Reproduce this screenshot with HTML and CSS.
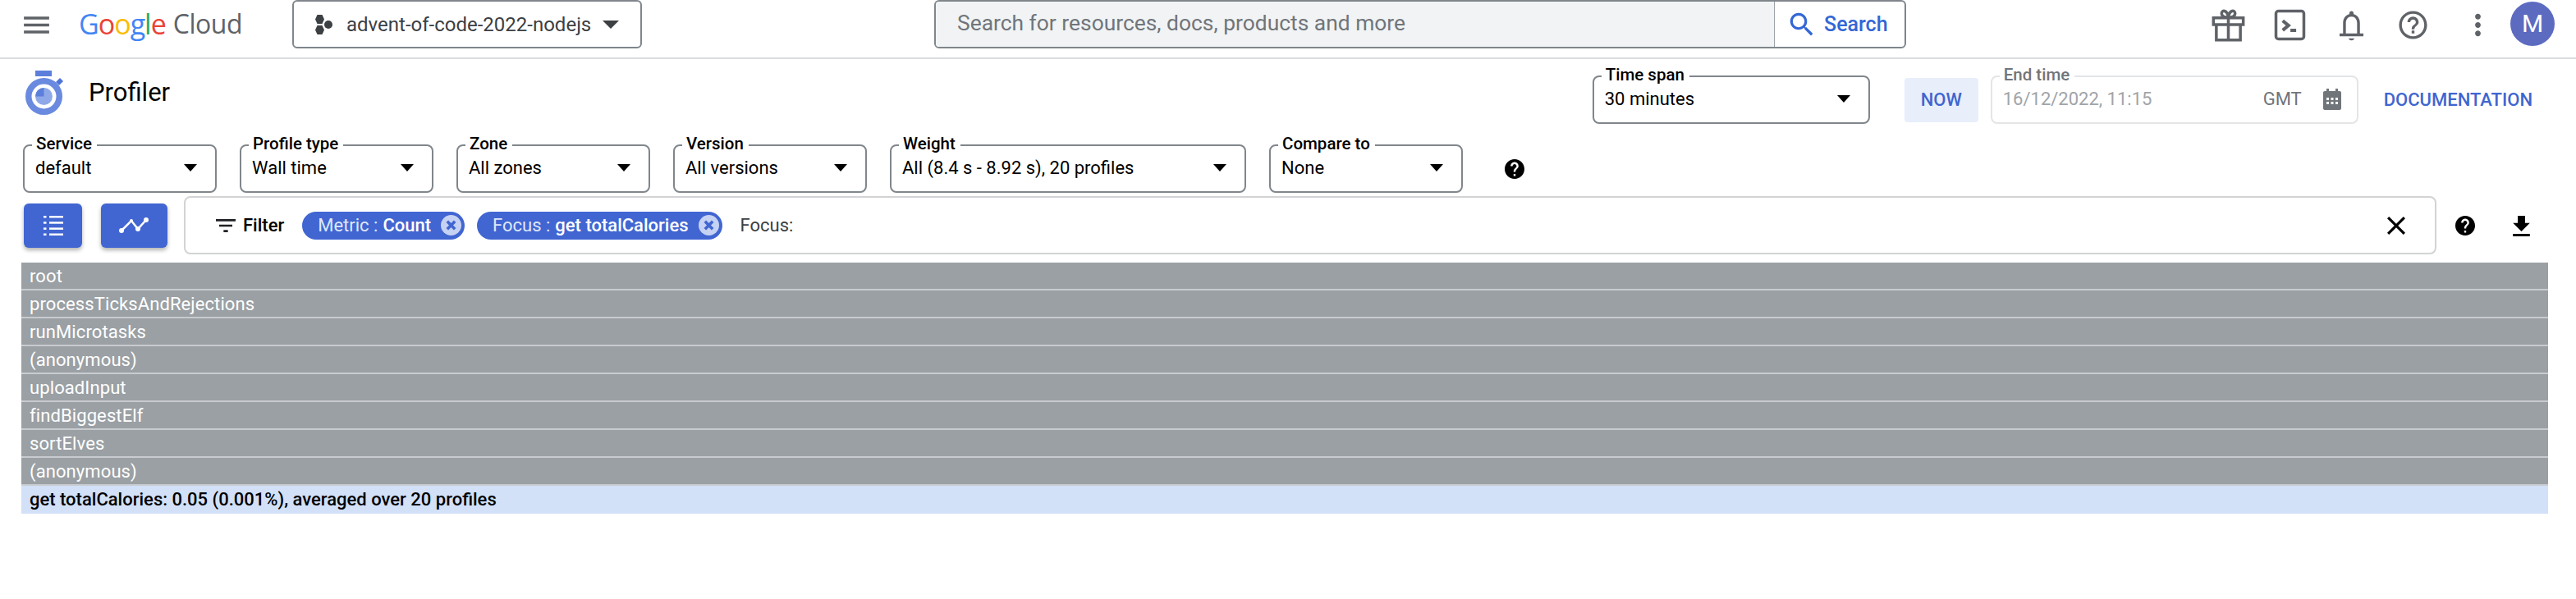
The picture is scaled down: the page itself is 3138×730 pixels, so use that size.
FILE: index.html
```html
<!DOCTYPE html>
<html lang="en">
<head>
<meta charset="UTF-8">
<title>Profiler - Google Cloud</title>
<link rel="stylesheet" href="styles.css">
</head>
<body>

<header class="topbar">
    <svg class="menu-icon" viewBox="0 0 24 24"><path d="M3 18h18v-2H3v2zm0-5h18v-2H3v2zm0-7v2h18V6H3z"/></svg>
    <div class="logo">
        <span class="blue">G</span><span class="red">o</span><span class="yellow">o</span><span class="blue">g</span><span class="green">l</span><span class="red">e</span>
        <span class="logo-cloud">Cloud</span>
    </div>
    <div class="project">
        <svg class="project-icon" viewBox="0 0 22 24"><path d="M3.500 0h6L12 5.500 9.500 11h-6L1 5.500zM3.500 13h6l2.500 5.500L9.500 24h-6L1 18.500z"/><circle cx="17" cy="12" r="5"/></svg>
        <span class="project-name">advent-of-code-2022-nodejs</span>
        <span class="arrow arrow-big"></span>
    </div>
    <div class="search">
        <div class="search-input">Search for resources, docs, products and more</div>
        <div class="search-btn">
            <svg viewBox="0 0 24 24"><path d="M15.500 14h-.79l-.28-.27C15.410 12.590 16 11.110 16 9.500 16 5.910 13.090 3 9.500 3S3 5.910 3 9.500 5.910 16 9.500 16c1.610 0 3.090-.59 4.230-1.570l.27.28v.79l5 4.990L20.490 19l-4.990-5zm-6 0C7.010 14 5 11.990 5 9.500S7.010 5 9.500 5 14 7.010 14 9.500 11.990 14 9.500 14z"/></svg>
            Search
        </div>
    </div>
    <div class="top-icons">
        <svg class="top-icon" viewBox="0 0 35 35"><path d="M2 10h31v7H2zM5 17v16h25V17M17.500 10v23M17.500 9.500c-4 0-7-1-7-4 0-4 6-4 7 4zM17.500 9.500c4 0 7-1 7-4 0-4-6-4-7 4z"/></svg>
        <svg class="top-icon" viewBox="0 0 35 35"><rect x="3" y="3" width="29" height="29" rx="2.500"/><path class="thick" d="M10 13l6 5-6 5M18 23h6"/></svg>
        <svg class="top-icon fill" viewBox="0 0 24 24"><path d="M12 23c1.100 0 2-.7 2-1.500h-4c0 .8.900 1.500 2 1.500zm6-5v-7.500c0-3.070-1.630-5.640-4.500-6.320V3.500c0-.830-.670-1.500-1.500-1.500s-1.500.670-1.500 1.500v.680C7.640 4.860 6 7.420 6 10.500V18H3.500v2h17v-2H18zm-2 0H8v-7.500C8 8.020 9.510 6 12 6s4 2.020 4 4.500V18z"/></svg>
        <svg class="top-icon fill" viewBox="0 0 24 24"><path d="M11 18h2v-2h-2v2zm1-16C6.480 2 2 6.480 2 12s4.480 10 10 10 10-4.480 10-10S17.520 2 12 2zm0 18c-4.410 0-8-3.590-8-8s3.590-8 8-8 8 3.590 8 8-3.590 8-8 8zm0-14c-2.210 0-4 1.790-4 4h2c0-1.100.900-2 2-2s2 .900 2 2c0 2-3 1.750-3 5h2c0-2.250 3-2.500 3-5 0-2.210-1.790-4-4-4z"/></svg>
        <svg class="top-icon fill dots" viewBox="0 0 24 24"><path d="M12 8c1.100 0 2-.900 2-2s-.900-2-2-2-2 .900-2 2 .900 2 2 2zm0 2c-1.100 0-2 .900-2 2s.900 2 2 2 2-.900 2-2-.900-2-2-2zm0 6c-1.100 0-2 .900-2 2s.900 2 2 2 2-.900 2-2-.900-2-2-2z"/></svg>
    </div>
    <div class="avatar">M</div>
</header>

<section class="title-row">
    <svg class="profiler-icon" viewBox="0 0 47 54">
        <rect x="13" y="0" width="20" height="7" fill="#5c7fdb"/>
        <path d="M38 14l5-5 4 4-5 5z" fill="#4f74d8"/>
        <circle cx="23.500" cy="31.500" r="18.750" fill="none" stroke="#6a8adf" stroke-width="7.500"/>
        <circle cx="23.500" cy="31.500" r="10.500" fill="#8fa9e8"/>
        <path d="M23.500 21v10.500H13A10.500 10.500 0 0 1 23.500 21z" fill="#5c7fdb"/>
    </svg>
    <h1 class="page-title">Profiler</h1>
    <div class="field time-span">
        <span class="field-label">Time span</span>
        <span class="field-value">30 minutes</span>
        <span class="arrow"></span>
    </div>
    <div class="now-btn">NOW</div>
    <div class="field end-time">
        <span class="field-label">End time</span>
        <span class="field-value">16/12/2022, 11:15</span>
        <span class="gmt">GMT</span>
        <svg class="calendar" viewBox="0 0 24 26"><path d="M5 0h3v3h8V0h3v3h2c1.100 0 2 .900 2 2v19c0 1.100-.900 2-2 2H3c-1.100 0-2-.900-2-2V5c0-1.100.900-2 2-2h2zM5 11v3h3v-3zm5.500 0v3h3v-3zm5.500 0v3h3v-3zM5 16v3h3v-3zm5.500 0v3h3v-3zm5.500 0v3h3v-3z"/></svg>
    </div>
    <a class="doc-link">DOCUMENTATION</a>
</section>

<section class="select-row">
    <div class="field">
        <span class="field-label">Service</span>
        <span class="field-value">default</span>
        <span class="arrow"></span>
    </div>
    <div class="field">
        <span class="field-label">Profile type</span>
        <span class="field-value">Wall time</span>
        <span class="arrow"></span>
    </div>
    <div class="field">
        <span class="field-label">Zone</span>
        <span class="field-value">All zones</span>
        <span class="arrow"></span>
    </div>
    <div class="field">
        <span class="field-label">Version</span>
        <span class="field-value">All versions</span>
        <span class="arrow"></span>
    </div>
    <div class="field weight">
        <span class="field-label">Weight</span>
        <span class="field-value">All (8.4 s - 8.92 s), 20 profiles</span>
        <span class="arrow"></span>
    </div>
    <div class="field">
        <span class="field-label">Compare to</span>
        <span class="field-value">None</span>
        <span class="arrow"></span>
    </div>
    <svg class="help-icon select-help" viewBox="2 2 20 20"><path d="M12 2C6.480 2 2 6.480 2 12s4.480 10 10 10 10-4.480 10-10S17.520 2 12 2zm1 17h-2v-2h2v2zm2.070-7.750l-.9.920C13.450 12.900 13 13.500 13 15h-2v-.5c0-1.100.450-2.100 1.170-2.830l1.240-1.260c.370-.36.590-.86.590-1.410 0-1.100-.9-2-2-2s-2 .9-2 2H8c0-2.210 1.790-4 4-4s4 1.790 4 4c0 .880-.36 1.680-.93 2.250z"/></svg>
</section>

<section class="filter-row">
    <button class="view-btn list-btn">
        <svg viewBox="0 0 24 24">
            <rect x="0" y="0" width="3.500" height="2.500"/><rect x="7" y="0" width="17" height="2.500"/>
            <rect x="0" y="7.200" width="3.500" height="2.500"/><rect x="7" y="7.200" width="17" height="2.500"/>
            <rect x="0" y="14.400" width="3.500" height="2.500"/><rect x="7" y="14.400" width="17" height="2.500"/>
            <rect x="0" y="21.500" width="3.500" height="2.500"/><rect x="7" y="21.500" width="17" height="2.500"/>
        </svg>
    </button>
    <button class="view-btn chart-btn">
        <svg viewBox="0 0 37 20"><path class="line" d="M3 16L15 4l8 10L33 3"/><circle cx="3" cy="16" r="3"/><circle cx="23" cy="14" r="3"/><circle cx="33" cy="3" r="3"/><circle cx="15" cy="4" r="2"/></svg>
    </button>
    <div class="filter-box">
        <svg class="filter-icon" viewBox="3 6 18 12"><path d="M10 18h4v-2h-4v2zM3 6v2h18V6H3zm3 7h12v-2H6v2z"/></svg>
        <span class="filter-label">Filter</span>
        <span class="chip">Metric : <b>Count</b><i class="chip-x"><svg viewBox="0 0 24 24"><path d="M7.500 7.500l9 9M16.500 7.500l-9 9"/></svg></i></span>
        <span class="chip">Focus : <b>get totalCalories</b><i class="chip-x"><svg viewBox="0 0 24 24"><path d="M7.500 7.500l9 9M16.500 7.500l-9 9"/></svg></i></span>
        <span class="focus-label">Focus:</span>
        <svg class="clear-icon" viewBox="5 5 14 14"><path d="M19 6.410L17.590 5 12 10.590 6.410 5 5 6.410 10.590 12 5 17.590 6.410 19 12 13.410 17.590 19 19 17.590 13.410 12z"/></svg>
    </div>
    <svg class="help-icon filter-help" viewBox="2 2 20 20"><path d="M12 2C6.480 2 2 6.480 2 12s4.480 10 10 10 10-4.480 10-10S17.520 2 12 2zm1 17h-2v-2h2v2zm2.070-7.750l-.9.920C13.450 12.900 13 13.500 13 15h-2v-.5c0-1.100.450-2.100 1.170-2.830l1.240-1.260c.370-.36.590-.86.590-1.410 0-1.100-.9-2-2-2s-2 .9-2 2H8c0-2.210 1.790-4 4-4s4 1.790 4 4c0 .880-.36 1.680-.93 2.250z"/></svg>
    <svg class="download-icon" viewBox="5 3 14 17"><path d="M19 9h-4V3H9v6H5l7 7 7-7zM5 18v2h14v-2H5z"/></svg>
</section>

<section class="flame">
    <div class="flame-row">root</div>
    <div class="flame-row">processTicksAndRejections</div>
    <div class="flame-row">runMicrotasks</div>
    <div class="flame-row">(anonymous)</div>
    <div class="flame-row">uploadInput</div>
    <div class="flame-row">findBiggestElf</div>
    <div class="flame-row">sortElves</div>
    <div class="flame-row">(anonymous)</div>
    <div class="flame-row flame-focus">get totalCalories: 0.05 (0.001%), averaged over 20 profiles</div>
</section>

</body>
</html>
```

FILE: styles.css
```css
* {
    box-sizing: border-box;
}
body {
    margin: 0;
    background-color: #fff;
    font-family: Roboto, Arial, sans-serif;
    color: #000;
}

/* top bar */
.topbar {
    display: flex;
    align-items: flex-start;
    height: 72px;
    padding-left: 24px;
    border-bottom: 2px solid #dadce0;
}
.menu-icon {
    width: 41px;
    height: 41px;
    margin-top: 10px;
    fill: #5f6368;
}
.logo {
    display: flex;
    width: 197px;
    margin-left: 31px;
    font-family: "Open Sans", sans-serif;
    font-size: 34px;
    line-height: 58px;
    letter-spacing: -1px;
    white-space: nowrap;
}
.logo .blue { color: #4285f4; }
.logo .red { color: #ea4335; }
.logo .yellow { color: #fbbc04; }
.logo .green { color: #34a853; }
.logo-cloud {
    margin-left: 9px;
    color: #5f6368;
    font-size: 32px;
    letter-spacing: -0.5px;
}
.project {
    display: flex;
    align-items: center;
    width: 426px;
    height: 59px;
    margin-left: 63px;
    padding: 0 26px 0 25px;
    border: 2px solid #80868b;
    border-radius: 6px;
}
.project-icon {
    width: 22px;
    height: 24px;
    fill: #3c4043;
}
.project-name {
    margin-left: 17px;
    font-size: 24px;
    color: #3c4043;
}
.arrow {
    width: 0;
    height: 0;
    margin-left: auto;
    border-left: 8px solid transparent;
    border-right: 8px solid transparent;
    border-top: 9px solid #000;
}
.arrow-big {
    border-left-width: 10px;
    border-right-width: 10px;
    border-top: 10px solid #3c4043;
}
.search {
    display: flex;
    width: 1184px;
    height: 59px;
    margin-left: 356px;
    border: 2px solid #80868b;
    border-radius: 6px;
    overflow: hidden;
}
.search-input {
    flex: 1;
    padding-left: 26px;
    background-color: #f1f3f4;
    border-right: 1px solid #9aa0a6;
    font-size: 26.400px;
    line-height: 53px;
    color: #70757a;
}
.search-btn {
    display: flex;
    align-items: center;
    gap: 8px;
    width: 158px;
    padding-left: 14px;
    color: #3367d6;
    font-size: 25px;
    font-weight: 500;
}
.search-btn svg {
    width: 38px;
    height: 38px;
    fill: #3367d6;
}
.top-icons {
    display: flex;
    align-items: center;
    gap: 34px;
    height: 60px;
    margin-left: auto;
}
.top-icon {
    width: 41px;
    height: 41px;
    fill: none;
    stroke: #5f6368;
    stroke-width: 3;
}
.top-icon .thick {
    stroke-width: 3.5;
}
.top-icon.fill {
    fill: #5f6368;
    stroke: none;
}
.top-icon.dots {
    margin-left: 4px;
}
.avatar {
    width: 54px;
    height: 54px;
    margin: 2px 26px 0 19px;
    border-radius: 50%;
    background-color: #5c6bc0;
    color: #fff;
    font-size: 30px;
    line-height: 54px;
    text-align: center;
}

/* outlined fields */
.field {
    position: relative;
    display: flex;
    align-items: center;
    width: 236px;
    height: 59px;
    padding: 0 22px 2px 13px;
    border: 2px solid #80868b;
    border-radius: 8px;
}
.field-label {
    position: absolute;
    left: 9px;
    top: -15px;
    padding: 0 6px 0 5px;
    background-color: #fff;
    font-size: 20.500px;
    font-weight: 500;
    line-height: 24px;
}
.field-value {
    font-size: 22px;
    white-space: nowrap;
}

/* title row */
.title-row {
    display: flex;
    align-items: flex-start;
    height: 104px;
    padding: 20px 53px 0 30px;
}
.profiler-icon {
    width: 47px;
    height: 54px;
    margin-top: -6px;
}
.page-title {
    margin: 0 0 0 31px;
    font-size: 31px;
    font-weight: 400;
    line-height: 42px;
}
.time-span {
    width: 338px;
    margin-left: auto;
}
.now-btn {
    width: 90px;
    height: 54px;
    margin: 3px 0 0 42px;
    border-radius: 4px;
    background-color: #e8eefa;
    color: #3f66d0;
    font-size: 22px;
    font-weight: 500;
    line-height: 54px;
    text-align: center;
}
.end-time {
    width: 448px;
    margin-left: 15px;
    padding-right: 18px;
    border-color: #e4e5e7;
}
.end-time .field-label {
    color: #70757a;
}
.end-time .field-value {
    color: #a0a4a8;
}
.gmt {
    margin-left: auto;
    color: #70757a;
    font-size: 22px;
}
.calendar {
    width: 24px;
    height: 26px;
    margin-left: 25px;
    fill: #70757a;
}
.doc-link {
    margin: 3px 0 0 31px;
    color: #3f66d0;
    font-size: 22px;
    font-weight: 500;
    line-height: 54px;
}

/* select row */
.select-row {
    display: flex;
    gap: 28px;
    height: 63px;
    padding-left: 28px;
}
.select-row .field {
    flex-shrink: 0;
}
.weight {
    width: 434px;
}
.help-icon {
    fill: #000;
}
.select-help {
    width: 24px;
    height: 24px;
    margin: 18px 0 0 23px;
}

/* filter row */
.filter-row {
    display: flex;
    height: 71px;
    padding-left: 29px;
}
.view-btn {
    display: flex;
    align-items: center;
    justify-content: center;
    height: 54px;
    margin-top: 9px;
    padding: 0;
    border: none;
    border-radius: 6px;
    background-color: #4166d2;
    box-shadow: 0 3px 5px rgba(0, 0, 0, 0.3);
}
.list-btn {
    width: 71px;
}
.chart-btn {
    width: 81px;
    margin-left: 23px;
}
.list-btn svg {
    width: 24px;
    height: 24px;
    fill: #fff;
}
.chart-btn svg {
    width: 37px;
    height: 20px;
    fill: #fff;
}
.chart-btn .line {
    fill: none;
    stroke: #fff;
    stroke-width: 2.500;
}
.filter-box {
    display: flex;
    align-items: center;
    width: 2744px;
    height: 71px;
    margin-left: 20px;
    padding-left: 37px;
    border: 2px solid #d2d3d5;
    border-radius: 8px;
}
.filter-icon {
    width: 24px;
    height: 16px;
    fill: #202124;
}
.filter-label {
    margin-left: 9px;
    font-size: 22px;
    font-weight: 500;
}
.chip {
    display: flex;
    align-items: center;
    height: 34px;
    margin-left: 15px;
    padding: 0 4px 0 19px;
    border-radius: 17px;
    background-color: #4166d2;
    color: #dfe6f8;
    font-size: 22px;
    white-space: nowrap;
}
.chip b {
    margin-left: 6px;
    color: #fff;
    font-weight: 500;
}
.filter-label + .chip {
    margin-left: 22px;
}
.chip-x {
    display: block;
    width: 25px;
    height: 25px;
    margin-left: 12px;
    border-radius: 50%;
    background-color: #c6d2f3;
}
.chip-x svg {
    display: block;
    fill: none;
    stroke: #4166d2;
    stroke-width: 3.500;
}
.focus-label {
    margin-left: 22px;
    font-size: 22px;
    color: #3c4043;
}
.clear-icon {
    width: 22px;
    height: 22px;
    margin-left: auto;
    margin-right: 36px;
}
.filter-help {
    width: 24px;
    height: 24px;
    margin: 24px 0 0 23px;
}
.download-icon {
    width: 21px;
    height: 25px;
    margin: 24px 0 0 46px;
}

/* flame graph */
.flame {
    width: 3078px;
    margin: 10px 0 0 26px;
}
.flame-row {
    height: 34px;
    padding-left: 10px;
    border-bottom: 2px solid #c8cbcf;
    background-color: #9aa0a4;
    color: #fff;
    font-size: 22px;
    letter-spacing: 0.100px;
    line-height: 33px;
}
.flame-focus {
    border-bottom: none;
    background-color: #d2e0f8;
    color: #000;
    font-weight: 500;
    letter-spacing: 0;
}
```
